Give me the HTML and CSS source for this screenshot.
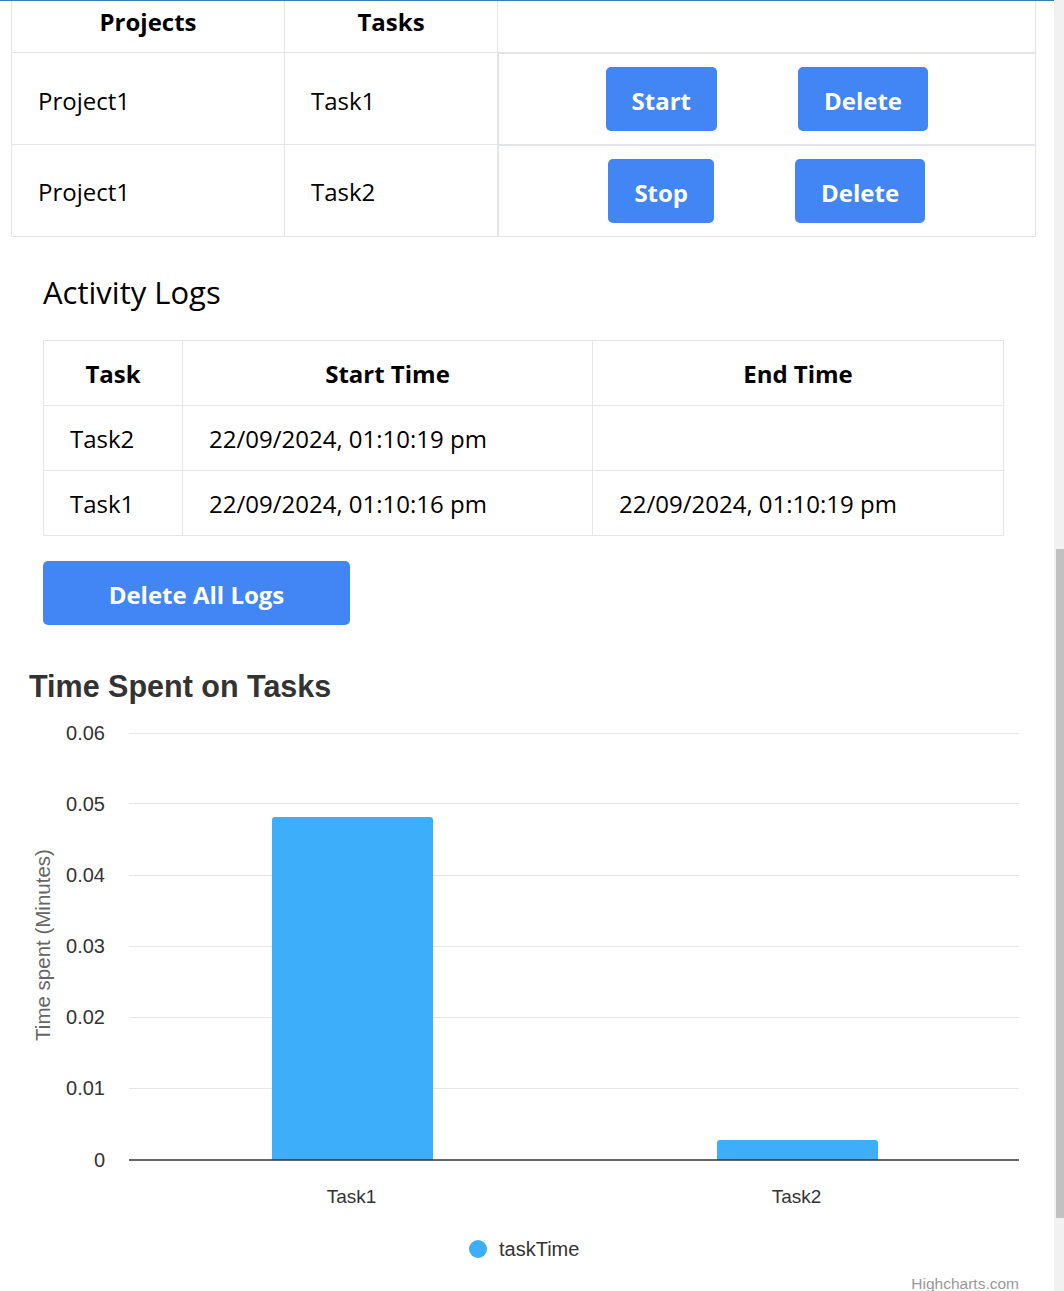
FILE: index.html
```html
<!DOCTYPE html>
<html lang="en">
<head>
<meta charset="utf-8">
<title>Task Tracker</title>
<link rel="stylesheet" href="styles.css">
</head>
<body>
<div class="page">
  <main class="main">
    <table class="tasks">
      <colgroup><col class="tc1"><col class="tc2"><col class="tc3"></colgroup>
      <thead>
        <tr><th>Projects</th><th>Tasks</th><th></th></tr>
      </thead>
      <tbody>
        <tr>
          <td>Project1</td>
          <td>Task1</td>
          <td class="actions"><div class="btns"><button class="btn">Start</button><button class="btn">Delete</button></div></td>
        </tr>
        <tr>
          <td>Project1</td>
          <td>Task2</td>
          <td class="actions"><div class="btns"><button class="btn">Stop</button><button class="btn">Delete</button></div></td>
        </tr>
      </tbody>
    </table>

    <section class="logs">
      <h2 class="logs-title">Activity Logs</h2>
      <table class="log-table">
        <colgroup><col class="lc1"><col class="lc2"><col class="lc3"></colgroup>
        <thead>
          <tr><th>Task</th><th>Start Time</th><th>End Time</th></tr>
        </thead>
        <tbody>
          <tr><td>Task2</td><td>22/09/2024, 01:10:19 pm</td><td></td></tr>
          <tr><td>Task1</td><td>22/09/2024, 01:10:16 pm</td><td>22/09/2024, 01:10:19 pm</td></tr>
        </tbody>
      </table>
      <button class="btn btn-wide">Delete All Logs</button>
    </section>

    <svg class="chart" width="1054" height="651" viewBox="0 640 1054 651" xmlns="http://www.w3.org/2000/svg">
      <text class="ch-title" x="29" y="697">Time Spent on Tasks</text>
      <g class="grid">
        <line x1="129" x2="1019" y1="733.5" y2="733.5"/>
        <line x1="129" x2="1019" y1="803.5" y2="803.5"/>
        <line x1="129" x2="1019" y1="875.5" y2="875.5"/>
        <line x1="129" x2="1019" y1="946.5" y2="946.5"/>
        <line x1="129" x2="1019" y1="1017.5" y2="1017.5"/>
        <line x1="129" x2="1019" y1="1088.5" y2="1088.5"/>
      </g>
      <path class="bar" d="M272 1160 V820 Q272 817 275 817 H430 Q433 817 433 820 V1160 Z"/>
      <path class="bar" d="M717 1160 V1143 Q717 1140 720 1140 H875 Q878 1140 878 1143 V1160 Z"/>
      <line class="axis" x1="129" x2="1019" y1="1160" y2="1160"/>
      <g class="ylab">
        <text x="105" y="740">0.06</text>
        <text x="105" y="811">0.05</text>
        <text x="105" y="882">0.04</text>
        <text x="105" y="953">0.03</text>
        <text x="105" y="1024">0.02</text>
        <text x="105" y="1095">0.01</text>
        <text x="105" y="1167">0</text>
      </g>
      <g class="xlab">
        <text x="351.5" y="1203">Task1</text>
        <text x="796.5" y="1203">Task2</text>
      </g>
      <text class="ytitle" transform="translate(50 945) rotate(-90)">Time spent (Minutes)</text>
      <circle class="dot" cx="478" cy="1249" r="9"/>
      <text class="legend" x="499" y="1256">taskTime</text>
      <text class="credits" x="1019" y="1289">Highcharts.com</text>
    </svg>
  </main>
  <div class="scrollbar"><div class="thumb"></div></div>
</div>
</body>
</html>
```

FILE: styles.css
```css
html, body {
  margin: 0;
  padding: 0;
  overflow: hidden;
  background: #ffffff;
}

body {
  font-family: "Open Sans", "Noto Sans", Lato, sans-serif;
  color: #000000;
}

.page {
  display: flex;
  height: 1291px;
}

.main {
  width: 1054px;
  flex: none;
  border-top: 1px solid #3d7eb0;
}

.scrollbar {
  width: 10px;
  flex: none;
  background: #f1f1f1;
}

.thumb {
  margin: 549px 0 0 2px;
  height: 669px;
  background: #c1c1c1;
}

/* top tasks table */
.tasks {
  margin-left: 11px;
  width: 1024px;
  border-collapse: collapse;
  table-layout: fixed;
  font-size: 24px;
  line-height: 32px;
}

.tc1 { width: 273px; }
.tc2 { width: 213px; }
.tc3 { width: 538px; }

.tasks th {
  font-weight: 700;
  text-align: center;
  padding: 5px 0 14px;
  border: 1px solid #e6e6e6;
  border-top: none;
}

.tasks td {
  height: 86px;
  padding: 4px 26px 0;
  border: 1px solid #e6e6e6;
  vertical-align: middle;
}

.tasks td.actions {
  height: 90px;
  padding: 0;
  border-top: 2px solid #e4e4eb;
  border-left: 2px solid #e4e4eb;
}

.btns {
  display: flex;
  justify-content: center;
  gap: 81px;
}

.btn {
  box-sizing: border-box;
  display: inline-flex;
  align-items: center;
  justify-content: center;
  height: 64px;
  padding: 4px 26px 0;
  border: none;
  border-radius: 5px;
  background: #4285f4;
  color: #ffffff;
  font-family: inherit;
  font-size: 24px;
  font-weight: 700;
  line-height: 32px;
}

/* logs */
.logs {
  padding-left: 43px;
}

.logs-title {
  margin: 35px 0 28px;
  font-size: 31px;
  font-weight: 400;
  line-height: 40px;
}

.log-table {
  width: 960px;
  border-collapse: collapse;
  table-layout: fixed;
  font-size: 24px;
  line-height: 32px;
}

.lc1 { width: 139px; }
.lc2 { width: 410px; }
.lc3 { width: 411px; }

.log-table th,
.log-table td {
  height: 62px;
  padding: 2px 26px 0;
  border: 1px solid #e6e6e6;
  vertical-align: middle;
  text-align: left;
}

.log-table th {
  font-weight: 700;
  text-align: center;
}

.btn-wide {
  display: flex;
  width: 307px;
  margin-top: 25px;
}

/* chart */
.chart {
  display: block;
  margin-top: 15px;
  font-family: "Liberation Sans", Arial, sans-serif;
}

.ch-title {
  font-size: 30.5px;
  font-weight: 700;
  fill: #333333;
}

.grid line {
  stroke: #e6e6e6;
  stroke-width: 1;
}

.bar {
  fill: #3daefa;
}

.axis {
  stroke: #333333;
  stroke-width: 1.5;
}

.ylab text {
  font-size: 20px;
  fill: #333333;
  text-anchor: end;
}

.xlab text {
  font-size: 19px;
  fill: #333333;
  text-anchor: middle;
}

.ytitle {
  font-size: 20.5px;
  fill: #666666;
  text-anchor: middle;
}

.dot {
  fill: #3daefa;
}

.legend {
  font-size: 20px;
  fill: #333333;
}

.credits {
  font-size: 15.5px;
  fill: #999999;
  text-anchor: end;
}
```
